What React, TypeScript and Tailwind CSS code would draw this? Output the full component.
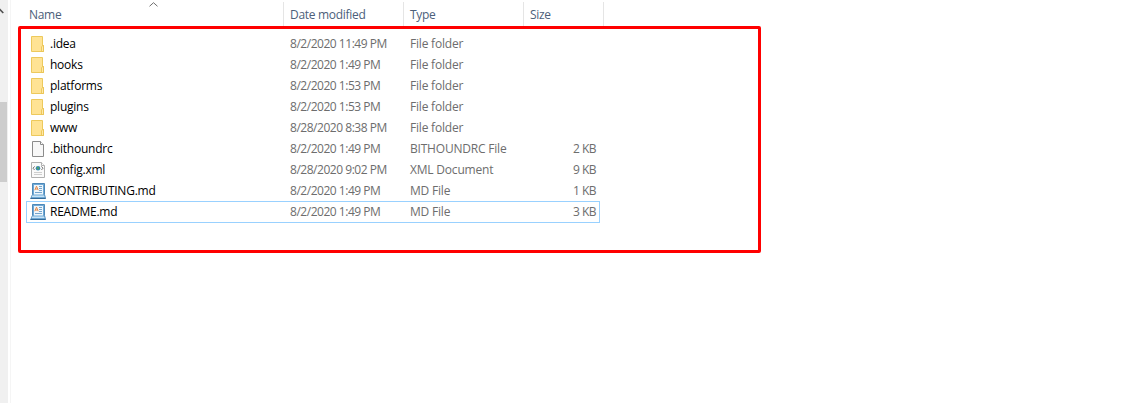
type Kind = 'folder' | 'blank' | 'xml' | 'md';

interface Entry {
  name: string;
  date: string;
  type: string;
  size?: string;
  kind: Kind;
}

const entries: Entry[] = [
  { name: '.idea', date: '8/2/2020 11:49 PM', type: 'File folder', kind: 'folder' },
  { name: 'hooks', date: '8/2/2020 1:49 PM', type: 'File folder', kind: 'folder' },
  { name: 'platforms', date: '8/2/2020 1:53 PM', type: 'File folder', kind: 'folder' },
  { name: 'plugins', date: '8/2/2020 1:53 PM', type: 'File folder', kind: 'folder' },
  { name: 'www', date: '8/28/2020 8:38 PM', type: 'File folder', kind: 'folder' },
  { name: '.bithoundrc', date: '8/2/2020 1:49 PM', type: 'BITHOUNDRC File', size: '2 KB', kind: 'blank' },
  { name: 'config.xml', date: '8/28/2020 9:02 PM', type: 'XML Document', size: '9 KB', kind: 'xml' },
  { name: 'CONTRIBUTING.md', date: '8/2/2020 1:49 PM', type: 'MD File', size: '1 KB', kind: 'md' },
  { name: 'README.md', date: '8/2/2020 1:49 PM', type: 'MD File', size: '3 KB', kind: 'md' },
];

function FileIcon({ kind }: { kind: Kind }) {
  return (
    <svg width="16" height="16" viewBox="0 0 16 16" className="shrink-0">
      {kind === 'folder' && (
        <>
          <path d="M1.5 .5h11v9h1v6h-12z" fill="#ffe394" stroke="#edc95c" />
          <path d="M11.5 15.5v-4.5l1-1.5h1v6z" fill="#ffe9a6" stroke="#e8c04d" strokeWidth=".8" />
        </>
      )}
      {kind === 'blank' && (
        <>
          <path d="M2.5 .5h8l3 3v12h-11z" fill="#f8f8f8" stroke="#8c8c8c" />
          <path d="M10.5 .5v3h3" fill="#fff" stroke="#8c8c8c" />
        </>
      )}
      {kind === 'xml' && (
        <>
          <path d="M1.5 .5h10l3 3v12h-13z" fill="#fafafa" stroke="#b0b0b0" />
          <path d="M11.5 .5v3h3" fill="#fff" stroke="#b0b0b0" />
          <path d="M4.6 4.4L3 6.2l1.6 1.8M11.4 4.4L13 6.2l-1.6 1.8" fill="none" stroke="#666" strokeWidth=".9" />
          <circle cx="8" cy="6.2" r="2.3" fill="#3989ad" />
          <path d="M7 5l2 .5-.5 2-1.5-.7z" fill="#51a85c" />
          <path d="M4 10.5h8M4 12.5h8" stroke="#cecece" />
        </>
      )}
      {kind === 'md' && (
        <>
          <path d="M2.5 .5h12v11l1 4H.8l1.7-4z" fill="#6fa9d6" stroke="#4d88b8" />
          <path d="M4 2h9v9.5H4z" fill="#eef6fc" />
          <path d="M4.8 7.2l1.7-4 1.7 4M5.5 6h2" fill="none" stroke="#e88a48" />
          <path d="M9 3.5h3M9 5.5h3M9 7.5h3M5 9.5h7" stroke="#75a5cc" />
          <path d="M2.2 12.5h11.9l.5 1.5h-13z" fill="#c8e3f5" />
          <path d="M.5 15.5h15" stroke="#356b98" />
        </>
      )}
    </svg>
  );
}

function FileRow({ entry, focused }: { entry: Entry; focused: boolean }) {
  return (
    <div
      className={`flex h-[22px] -mb-px w-[574px] items-center border pl-[3px] text-[#6d6d6d] ${
        focused ? 'border-[#99d1ff]' : 'border-transparent'
      }`}
    >
      <FileIcon kind={entry.kind} />
      <span className="w-[244px] shrink-0 pl-1 tracking-[-0.24px] text-black">{entry.name}</span>
      <span className="w-[120px] shrink-0 tracking-[-0.47px]">{entry.date}</span>
      <span className="w-[120px] shrink-0 tracking-[-0.2px]">{entry.type}</span>
      <span className="grow pr-[3px] text-right tracking-[-0.5px]">{entry.size}</span>
    </div>
  );
}

export default function App() {
  return (
    <div className="flex h-[403px] w-[1121px] overflow-hidden bg-white font-['Open_Sans','Noto_Sans',sans-serif] text-[12px] leading-4">
      <div className="flex w-2 shrink-0 flex-col bg-[#f0f0f0] pt-[2px]">
        <svg width="8" height="14" viewBox="0 0 8 14" className="mb-[86px]">
          <path d="M-4 11L0 7.5L3.3 11" fill="none" stroke="#505050" strokeWidth="1.6" />
        </svg>
        <div className="h-20 w-[7px] bg-[#cdcdcd]" />
      </div>
      <div className="ml-[2px] w-2 shrink-0 border-l border-[#f5f5f5]" />
      <div className="flex flex-col">
        <div className="flex h-[26px] pt-[2px] tracking-[-0.3px] text-[#4c607a]">
          <div className="relative w-[266px] border-r border-[#e5e5e5] pl-[11px] pt-[5px]">
            Name
            <svg width="9" height="5" viewBox="0 0 9 5" className="absolute left-[131px] top-0">
              <path d="M.5 4.3L4.5 .7L8.5 4.3" fill="none" stroke="#707070" />
            </svg>
          </div>
          <div className="w-[120px] border-r border-[#e5e5e5] pl-[6px] pt-[5px]">Date modified</div>
          <div className="w-[120px] border-r border-[#e5e5e5] pl-[6px] pt-[5px]">Type</div>
          <div className="w-20 border-r border-[#e5e5e5] pl-[6px] pt-[5px]">Size</div>
        </div>
        <div className="h-[227px] w-[743px] rounded-[2px] border-[3px] border-[#ff0000] pl-[5px] pt-[4px]">
          {entries.map((entry) => (
            <FileRow key={entry.name} entry={entry} focused={entry.name === 'README.md'} />
          ))}
        </div>
      </div>
    </div>
  );
}
